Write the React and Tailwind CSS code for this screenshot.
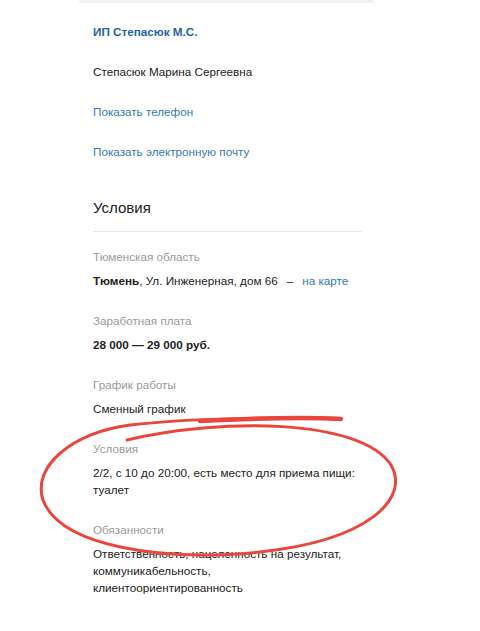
import React from 'react';

const fields = [
  { label: 'Заработная плата', value: <span className="font-bold">28 000 — 29 000 руб.</span> },
  { label: 'График работы', value: 'Сменный график' },
  { label: 'Условия', value: '2/2, с 10 до 20:00, есть место для приема пищи: туалет' },
  {
    label: 'Обязанности',
    value: 'Ответственность, нацеленность на результат, коммуникабельность, клиентоориентированность',
  },
];

export default function App() {
  return (
    <div
      className="relative w-[480px] h-[631px] overflow-hidden bg-white text-[11.7px] leading-[17px] text-[#222]"
      style={{ fontFamily: '"Liberation Sans", Arial, sans-serif' }}
    >
      <div className="ml-[79px] w-[295px] h-[3px] bg-[#eef1f5]" />

      <div className="pl-[93px] w-[362px] pt-[9px]">
        {/* контакты */}
        <div className="flex flex-col">
          <a className="leading-[40px] font-bold text-[#1d64a5]">ИП Степасюк М.С.</a>
          <div className="leading-[40px]">Степасюк Марина Сергеевна</div>
          <a className="leading-[40px] text-[#3478b4]">Показать телефон</a>
          <a className="leading-[40px] text-[#3478b4]">Показать электронную почту</a>
        </div>

        <div className="mt-[24px] pb-[11px] border-b border-[#e6e6e6]">
          <h2 className="text-[15px] leading-[24px] text-[#222]">Условия</h2>
        </div>

        <div className="mt-[16px] flex flex-col gap-[23px]">
          <div className="flex flex-col gap-[7px]">
            <div className="text-[#9a9a9a]">Тюменская область</div>
            <div>
              <span className="font-bold">Тюмень</span>, Ул. Инженерная, дом 66
              <span className="mx-[9px]">–</span>
              <a className="text-[#3478b4]">на карте</a>
            </div>
          </div>
          {fields.map((f) => (
            <div key={f.label} className="flex flex-col gap-[7px]">
              <div className="text-[#9a9a9a]">{f.label}</div>
              <div>{f.value}</div>
            </div>
          ))}
        </div>
      </div>

      {/* red marker annotation drawn over the page */}
      <svg
        className="absolute inset-0 pointer-events-none"
        width="480"
        height="631"
        viewBox="0 0 480 631"
        fill="none"
      >
        <path
          d="M127 440 C 220 418 360 418 391 465 C 410 498 370 540 260 552 C 160 562 60 546 43 500 C 32 466 72 433 130 425 C 190 418 280 417 341 419"
          stroke="#e9473d"
          strokeWidth="3"
          strokeLinecap="round"
        />
        <path d="M200 421 C 260 418 300 417 341 419" stroke="#e9473d" strokeWidth="4.5" strokeLinecap="round" />
      </svg>
    </div>
  );
}
